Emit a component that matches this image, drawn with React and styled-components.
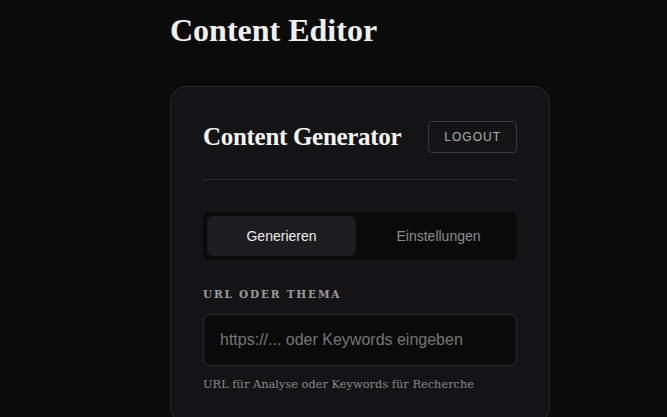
import React from "react";
import styled, { createGlobalStyle } from "styled-components";

const Global = createGlobalStyle`
  html, body { margin: 0; padding: 0; background: #0b0b0b; }
  body { font-family: "Liberation Sans", Arial, sans-serif; color: #eee; }
  * { box-sizing: border-box; }
`;

const Page = styled.div`
  min-height: 417px;
  padding: 10px 0 0 170px;
  display: flex;
  flex-direction: column;
`;

const PageTitle = styled.h1`
  margin: 0 0 36px;
  font-family: "Liberation Serif", "DejaVu Serif", serif;
  font-weight: 700;
  font-size: 32px;
  line-height: 40px;
  color: #f0f0f0;
`;

const Card = styled.section`
  width: 380px;
  background: #141416;
  border: 1px solid #2a2a2d;
  border-radius: 16px;
  padding: 34px 32px 32px;
`;

const Header = styled.div`
  display: flex;
  align-items: center;
  justify-content: space-between;
  padding-bottom: 26px;
  border-bottom: 1px solid #2a2a2d;
`;

const CardTitle = styled.h2`
  margin: 0;
  font-family: "Liberation Serif", "DejaVu Serif", serif;
  font-weight: 700;
  font-size: 25px;
  letter-spacing: -0.3px;
  color: #f4f4f4;
`;

const Logout = styled.button`
  height: 32px;
  padding: 0 15px;
  background: transparent;
  border: 1px solid #3a3a3d;
  border-radius: 4px;
  color: #b0b0b0;
  font-family: "Liberation Sans", Arial, sans-serif;
  font-size: 12px;
  letter-spacing: 1px;
`;

const Tabs = styled.div`
  margin-top: 32px;
  display: grid;
  grid-template-columns: 1fr 1fr;
  gap: 8px;
  padding: 4px;
  background: #0a0a0a;
  border-radius: 8px;
`;

const Tab = styled.button`
  height: 40px;
  border: none;
  border-radius: 6px;
  background: ${(p) => (p.$active ? "#1d1d20" : "transparent")};
  color: ${(p) => (p.$active ? "#ececec" : "#8d8d8d")};
  font-family: "Liberation Sans", Arial, sans-serif;
  font-size: 14px;
`;

const Field = styled.div`
  margin-top: 28px;
  display: flex;
  flex-direction: column;
`;

const Label = styled.label`
  font-family: "DejaVu Serif", "Liberation Serif", serif;
  font-weight: 700;
  font-size: 10.5px;
  letter-spacing: 1.8px;
  color: #9a9a9a;
  text-transform: uppercase;
`;

const Input = styled.input`
  margin-top: 14px;
  height: 52px;
  padding: 0 16px;
  background: #0a0a0a;
  border: 1px solid #2a2a2d;
  border-radius: 8px;
  color: #eee;
  font-family: "Liberation Sans", Arial, sans-serif;
  font-size: 16px;
  outline: none;
  &::placeholder { color: #767676; }
`;

const Hint = styled.p`
  margin: 11px 0 0;
  font-family: "DejaVu Serif", "Liberation Serif", serif;
  font-size: 11.4px;
  color: #8a8a8a;
`;

export default function App() {
  return (
    <>
      <Global />
      <Page>
        <PageTitle>Content Editor</PageTitle>
        <Card>
          <Header>
            <CardTitle>Content Generator</CardTitle>
            <Logout>LOGOUT</Logout>
          </Header>
          <Tabs>
            <Tab $active>Generieren</Tab>
            <Tab>Einstellungen</Tab>
          </Tabs>
          <Field>
            <Label>URL oder Thema</Label>
            <Input placeholder="https://... oder Keywords eingeben" />
            <Hint>URL für Analyse oder Keywords für Recherche</Hint>
          </Field>
        </Card>
      </Page>
    </>
  );
}
